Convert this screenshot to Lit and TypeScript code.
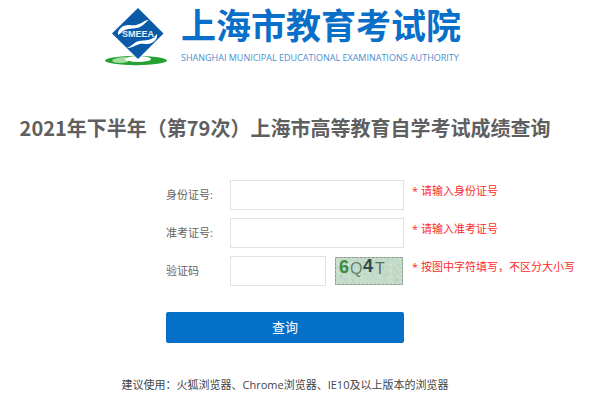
import { LitElement, html, css, svg } from "lit";
import { customElement } from "lit/decorators.js";

@customElement("smeea-logo")
class SmeeaLogo extends LitElement {
  static styles = css`
    :host { display: block; flex: none; }
    svg { display: block; }
    .mark { font: bold 9px "Liberation Sans", sans-serif; }
  `;
  render() {
    return html`<svg width="64" height="60" viewBox="0 0 64 60" role="img" aria-label="SMEEA">
      <ellipse cx="31" cy="53.500" rx="31" ry="4.700" fill="#25a032"/>
      <path d="M7 53Q12 50 21 50L23 55Q14 57 8 55Z" fill="#a5dd9c"/>
      <ellipse cx="33" cy="52" rx="13" ry="3" fill="#fff"/>
      <path d="M33 1L58.500 26.500L33 52L7 26.500Z" fill="#0b5aa8"/>
      <path d="M13 28C12 23 17 18 24 18C28 18 30 19 34 17C38 16 39 13 44 13C40 15 38 20 32 21C27 22 20 21 16 26Z" fill="#fff"/>
      <path d="M52 27C53 32 49 36 43 37C38 37 36 36 32 38C28 39 27 41 22 41C27 39 29 35 34 34C40 33 46 34 50 29Z" fill="#fff"/>
      <text class="mark" x="33" y="30" text-anchor="middle" fill="#e4f0fb" stroke="#0b5aa8" stroke-width="1" paint-order="stroke">SMEEA</text>
    </svg>`;
  }
}

@customElement("captcha-image")
class CaptchaImage extends LitElement {
  static styles = css`
    :host { display: block; flex: none; }
    svg { display: block; }
    .bold { font: bold 18px "Liberation Sans", sans-serif; }
    .thin { font: 16px "Liberation Sans", sans-serif; }
  `;
  private strokes() {
    const items = [];
    for (let i = 0; i < 60; i++) {
      const x = 5 + ((i * 23) % 59);
      const y = 6 + ((i * 7) % 19);
      const dx = ((i * 7) % 9) - 4;
      const dy = ((i * 5) % 9) - 4;
      items.push(svg`<path d="M${x} ${y}l${dx} ${dy}" stroke=${i % 3 ? "#b2cdb9" : "#dff0e2"}/>`);
    }
    return items;
  }
  render() {
    return html`<svg width="70" height="30" viewBox="0 0 70 30" role="img" aria-label="验证码">
      <rect x="1" y="1" width="68" height="28" fill="#c5dccb"/>
      ${this.strokes()}
      <rect x="1.500" y="1.500" width="67" height="27" fill="none" stroke="#8d9b91" stroke-dasharray="3 1"/>
      <text class="bold" x="5" y="17" fill="#3f8a3c">6</text>
      <text class="thin" x="16" y="18" fill="#64836f">Q</text>
      <text class="bold" x="29" y="16" fill="#2c4a46">4</text>
      <text class="thin" x="41" y="18" fill="#4e7060">T</text>
    </svg>`;
  }
}

@customElement("app-root")
class AppRoot extends LitElement {
  static styles = css`
    :host {
      display: block;
      padding: 0 30px 8px 0;
      background: #fff;
      color: #666;
      font: 11px/16px "Open Sans", "Noto Sans CJK SC", sans-serif;
    }
    .brand {
      display: flex;
      justify-content: center;
      align-items: center;
      gap: 12px;
      padding-right: 4px;
      color: #0a6fc8;
    }
    .name {
      font: bold 35px/48px "Noto Sans CJK SC", sans-serif;
    }
    .english {
      font-size: 9px;
      line-height: 20px;
      padding-bottom: 6px;
      color: #4a8fcf;
      white-space: nowrap;
    }
    h1 {
      margin: 38px 0 36px;
      font: bold 20px/32px "Noto Sans CJK SC", sans-serif;
      color: #5f5f5f;
      text-align: center;
      white-space: nowrap;
    }
    form {
      display: grid;
      grid-template-columns: minmax(0, 1fr) 64px 174px minmax(0, 1fr);
      row-gap: 8px;
      align-items: center;
    }
    label { grid-column: 2; }
    .field { display: flex; gap: 8px; }
    input {
      box-sizing: border-box;
      flex: 1;
      min-width: 0;
      height: 30px;
      padding: 0 8px;
      border: 1px solid #e2e2e2;
      background: #fff;
      font: inherit;
      outline: none;
    }
    .hint {
      padding: 0 0 8px 8px;
      color: #fb2c2c;
      white-space: nowrap;
    }
    button {
      grid-column: 2 / 4;
      height: 31px;
      margin-top: 18px;
      padding: 0;
      border: 0;
      border-radius: 2px;
      background: #0470c8;
      color: #fff;
      font: 13px/31px "Open Sans", "Noto Sans CJK SC", sans-serif;
    }
    .advice {
      margin: 34px 0 0;
      color: #444;
      text-align: center;
    }
  `;

  render() {
    return html`
      <header class="brand">
        <smeea-logo></smeea-logo>
        <div>
          <div class="name">上海市教育考试院</div>
          <div class="english">SHANGHAI MUNICIPAL EDUCATIONAL EXAMINATIONS AUTHORITY</div>
        </div>
      </header>
      <main>
        <h1>2021年下半年（第79次）上海市高等教育自学考试成绩查询</h1>
        <form @submit=${(e: Event) => e.preventDefault()}>
          <label for="identity">身份证号:</label>
          <div class="field"><input id="identity" type="text"></div>
          <span class="hint">* 请输入身份证号</span>
          <label for="ticket">准考证号:</label>
          <div class="field"><input id="ticket" type="text"></div>
          <span class="hint">* 请输入准考证号</span>
          <label for="code">验证码</label>
          <div class="field"><input id="code" type="text"><captcha-image></captcha-image></div>
          <span class="hint">* 按图中字符填写，不区分大小写</span>
          <button type="submit">查询</button>
        </form>
      </main>
      <p class="advice">建议使用：火狐浏览器、Chrome浏览器、IE10及以上版本的浏览器</p>
    `;
  }
}
